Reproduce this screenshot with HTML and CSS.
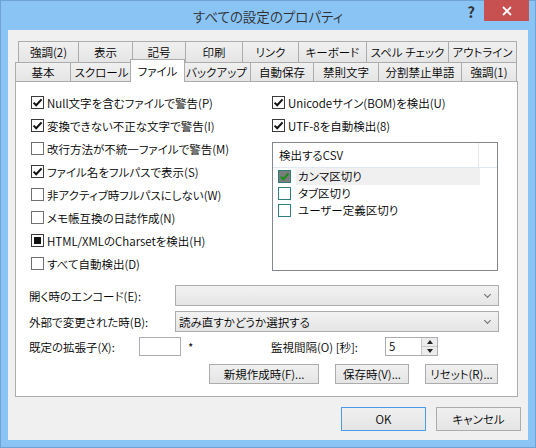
FILE: index.html
```html
<!DOCTYPE html>
<html lang="ja">
<head>
  <meta charset="UTF-8" />
  <title>すべての設定のプロパティ</title>
  <link rel="stylesheet" href="styles.css">
</head>
<body>
  <div class="window">
    <div class="titlebar">
      <span class="title">すべての設定のプロパティ</span>
      <div class="caption-buttons">
        <span class="help">?</span>
        <span class="close">
          <svg width="10" height="10" viewBox="0 0 10 10"><path d="M1 1 L9 9 M9 1 L1 9" stroke="#fff" stroke-width="1.8"/></svg>
        </span>
      </div>
    </div>

    <div class="client">
      <div class="tab-row back">
        <div class="tab">強調(2)</div>
        <div class="tab">表示</div>
        <div class="tab">記号</div>
        <div class="tab">印刷</div>
        <div class="tab">リンク</div>
        <div class="tab">キーボード</div>
        <div class="tab">スペル チェック</div>
        <div class="tab">アウトライン</div>
      </div>
      <div class="tab-row front">
        <div class="tab">基本</div>
        <div class="tab">スクロール</div>
        <div class="tab active">ファイル</div>
        <div class="tab">バックアップ</div>
        <div class="tab">自動保存</div>
        <div class="tab">禁則文字</div>
        <div class="tab">分割禁止単語</div>
        <div class="tab">強調(1)</div>
      </div>

      <div class="panel">
        <div class="options">
          <div class="col left">
            <div class="check"><span class="cb on"></span>Null文字を含むファイルで警告(P)</div>
            <div class="check"><span class="cb on"></span>変換できない不正な文字で警告(I)</div>
            <div class="check"><span class="cb"></span>改行方法が不統一ファイルで警告(M)</div>
            <div class="check"><span class="cb on"></span>ファイル名をフルパスで表示(S)</div>
            <div class="check"><span class="cb"></span>非アクティブ時フルパスにしない(W)</div>
            <div class="check"><span class="cb"></span>メモ帳互換の日誌作成(N)</div>
            <div class="check"><span class="cb mixed"></span>HTML/XMLのCharsetを検出(H)</div>
            <div class="check"><span class="cb"></span>すべて自動検出(D)</div>
          </div>
          <div class="col right">
            <div class="check"><span class="cb on"></span>Unicodeサイン(BOM)を検出(U)</div>
            <div class="check"><span class="cb on"></span>UTF-8を自動検出(8)</div>
            <div class="listbox">
              <div class="lb-header">
                <div class="lb-col">検出するCSV</div>
              </div>
              <div class="lb-item">
                <span class="lb-cb on"></span><span class="lb-text hot">カンマ区切り</span>
              </div>
              <div class="lb-item">
                <span class="lb-cb"></span><span class="lb-text">タブ区切り</span>
              </div>
              <div class="lb-item">
                <span class="lb-cb"></span><span class="lb-text">ユーザー定義区切り</span>
              </div>
            </div>
          </div>
        </div>

        <div class="form">
          <div class="form-row">
            <span class="label">開く時のエンコード(E):</span>
            <div class="combo"><span></span><i class="chevron"></i></div>
          </div>
          <div class="form-row">
            <span class="label">外部で変更された時(B):</span>
            <div class="combo"><span>読み直すかどうか選択する</span><i class="chevron"></i></div>
          </div>
          <div class="form-row short">
            <span class="label ext">既定の拡張子(X):</span>
            <span class="textbox"></span>
            <span class="star">*</span>
            <span class="label interval">監視間隔(O) [秒]:</span>
            <div class="spin">
              <span class="spin-value">5</span>
              <div class="spin-buttons">
                <span class="up"></span>
                <span class="down"></span>
              </div>
            </div>
          </div>
          <div class="form-row buttons">
            <button class="btn new">新規作成時(F)...</button>
            <button class="btn">保存時(V)...</button>
            <button class="btn">リセット(R)...</button>
          </div>
        </div>
      </div>

      <div class="dialog-buttons">
        <button class="btn big default">OK</button>
        <button class="btn big">キャンセル</button>
      </div>
    </div>
  </div>
</body>
</html>
```

FILE: styles.css
```css
* {
  box-sizing: border-box;
}

body {
  margin: 0;
  font-family: "Noto Sans CJK JP", "Noto Sans", sans-serif;
  font-size: 11.5px;
  font-weight: 350;
  font-feature-settings: "palt";
  color: #000;
}

.window {
  width: 536px;
  height: 448px;
  background: #8ac4f4;
  border: 1px solid #6fa3d6;
  display: flex;
  flex-direction: column;
}

.titlebar {
  height: 29px;
  display: grid;
  grid-template-columns: 1fr auto 1fr;
  align-items: start;
}

.title {
  grid-column: 2;
  font-size: 13.5px;
  line-height: 31px;
  color: #2e2e2e;
}

.caption-buttons {
  grid-column: 3;
  justify-self: end;
  display: flex;
  margin-right: 6px;
  margin-top: -1px;
}

.help {
  width: 26px;
  height: 21px;
  text-align: center;
  font-size: 15px;
  font-weight: bold;
  line-height: 23px;
  color: #333;
}

.close {
  width: 45px;
  height: 21px;
  background: #c75050;
  display: flex;
  align-items: center;
  justify-content: center;
}

.client {
  flex: 1;
  margin: 0 7px 7px;
  background: #f0f0f0;
  padding: 11px 10px 9px 7px;
  display: flex;
  flex-direction: column;
}

/* tabs */

.tab-row {
  display: flex;
  margin-right: 1px;
}

.tab-row.back {
  margin-left: 3px;
}

.tab {
  flex: none;
  height: 21px;
  margin-left: -1px;
  border: 1px solid #acacac;
  border-bottom: none;
  background: linear-gradient(#f0f0f0, #e5e5e5);
  text-align: center;
  line-height: 20px;
  white-space: nowrap;
}

.tab:first-child {
  margin-left: 0;
}

.tab:last-child {
  flex: 1;
}

.back .tab:nth-child(1) { width: 61px; }
.back .tab:nth-child(2) { width: 55px; }
.back .tab:nth-child(3) { width: 54px; }
.back .tab:nth-child(4) { width: 58px; }
.back .tab:nth-child(5) { width: 57px; }
.back .tab:nth-child(6) { width: 69px; }
.back .tab:nth-child(7) { width: 83px; }

.front .tab:nth-child(1) { width: 56px; }
.front .tab:nth-child(2) { width: 63px; }
.front .tab:nth-child(3) { width: 51px; }
.front .tab:nth-child(4) { width: 69px; }
.front .tab:nth-child(5) { width: 64px; }
.front .tab:nth-child(6) { width: 66px; }
.front .tab:nth-child(7) { width: 84px; }

.front .tab {
  height: 19px;
  line-height: 18px;
}

.front .tab.active {
  position: relative;
  z-index: 2;
  height: 23px;
  margin: -3px -2px -1px -3px;
  width: 55px;
  background: #fff;
  line-height: 22px;
}

/* panel */

.panel {
  height: 316px;
  background: #fff;
  border: 1px solid #acacac;
  padding: 9px 16px 0 13px;
}

.options {
  display: flex;
  padding-left: 2px;
}

.col.left {
  width: 241px;
}

.col.right {
  width: 226px;
}

.check {
  height: 23px;
  display: flex;
  align-items: center;
  white-space: nowrap;
  line-height: 16px;
}

.cb {
  width: 13px;
  height: 13px;
  margin-right: 3px;
  border: 1px solid #707070;
  background: #fff;
  flex: none;
  display: flex;
  align-items: center;
  justify-content: center;
}

.cb.on {
  border-color: #3a3a3a;
  background: #fff url("data:image/svg+xml,%3Csvg xmlns='http://www.w3.org/2000/svg' width='11' height='11'%3E%3Cpath d='M1.6 5.6 L4.2 8.3 L9.6 2.4' fill='none' stroke='%23111' stroke-width='2'/%3E%3C/svg%3E") center no-repeat;
}

.cb.mixed {
  border-color: #3a3a3a;
}

.cb.mixed::after {
  content: "";
  width: 7px;
  height: 7px;
  background: #111;
}

.listbox {
  margin-top: 5px;
  height: 129px;
  border: 1px solid #828790;
}

.lb-header {
  height: 25px;
  border-bottom: 1px solid #e2e9f3;
  display: flex;
}

.lb-col {
  width: 206px;
  padding-left: 6px;
  line-height: 24px;
  border-right: 1px solid #e8e8e8;
}

.lb-item {
  height: 17px;
  display: flex;
  align-items: center;
  padding-left: 5px;
}

.lb-cb {
  width: 13px;
  height: 13px;
  margin-right: 5px;
  border: 1px solid #2c8080;
  background: #fff;
  flex: none;
}

.lb-cb.on {
  background: #7c7c7c url("data:image/svg+xml,%3Csvg xmlns='http://www.w3.org/2000/svg' width='11' height='11'%3E%3Cpath d='M1.8 5.6 L4.3 8.2 L9.4 2.6' fill='none' stroke='%23189018' stroke-width='2'/%3E%3C/svg%3E") center no-repeat;
}

.lb-text {
  width: 184px;
  height: 17px;
  padding-left: 2px;
  line-height: 17px;
}

.lb-text.hot {
  background: #f0f0f0;
}

/* form */

.form {
  margin-top: 10px;
}

.form-row {
  height: 21px;
  margin-bottom: 5px;
  display: flex;
  align-items: center;
  white-space: nowrap;
}

.label {
  width: 146px;
}

.combo {
  width: 324px;
  height: 21px;
  border: 1px solid #acacac;
  background: linear-gradient(#f2f2f2, #e5e5e5);
  display: flex;
  align-items: center;
  justify-content: space-between;
  padding: 0 8px 0 3px;
  line-height: 18px;
}

.chevron {
  width: 5px;
  height: 5px;
  border-right: 1.5px solid #6a6a6a;
  border-bottom: 1.5px solid #6a6a6a;
  transform: rotate(45deg);
  margin-top: -3px;
}

.form-row.short {
  height: 19px;
}

.label.ext {
  width: 110px;
}

.textbox {
  width: 42px;
  height: 19px;
  border: 1px solid #abadb3;
  background: #fff;
}

.star {
  width: 90px;
  padding-left: 7px;
}

.label.interval {
  width: 114px;
}

.spin {
  width: 53px;
  height: 19px;
  border: 1px solid #abadb3;
  display: flex;
}

.spin-value {
  flex: 1;
  padding-left: 3px;
  line-height: 17px;
}

.spin-buttons {
  width: 16px;
  display: flex;
  flex-direction: column;
  border-left: 1px solid #c8c8c8;
}

.spin-buttons span {
  flex: 1;
  background: #ececec;
  display: flex;
  align-items: center;
  justify-content: center;
}

.spin-buttons .up {
  border-bottom: 1px solid #c8c8c8;
}

.spin-buttons .up::after,
.spin-buttons .down::after {
  content: "";
  border-left: 3.5px solid transparent;
  border-right: 3.5px solid transparent;
}

.spin-buttons .up::after {
  border-bottom: 4px solid #222;
}

.spin-buttons .down::after {
  border-top: 4px solid #222;
}

.form-row.buttons {
  margin-top: 8px;
  height: 20px;
  justify-content: flex-end;
  gap: 16px;
  padding-right: 3px;
}

button {
  font-family: inherit;
  font-size: 11.5px;
  font-weight: 350;
  font-feature-settings: "palt";
  color: #000;
  padding: 0;
  border: 1px solid #acacac;
  background: linear-gradient(#f0f0f0, #e5e5e5);
}

.btn {
  width: 74px;
  height: 20px;
  line-height: 17px;
}

.btn:last-child {
  width: 73px;
}

.btn.new {
  width: 110px;
}

.dialog-buttons {
  margin-top: 10px;
  margin-right: -3px;
  display: flex;
  justify-content: flex-end;
  gap: 10px;
}

.btn.big {
  width: 85px;
  height: 24px;
}

.btn.default {
  border-color: #4a9be9;
}
```
